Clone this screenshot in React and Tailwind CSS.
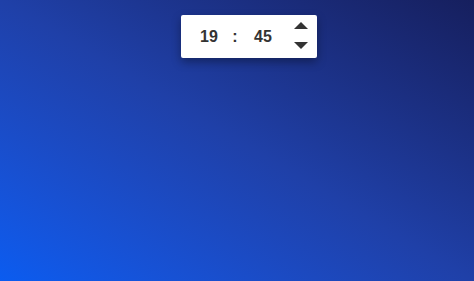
export default function App() {
  return (
    <div className="w-[474px] h-[281px] overflow-hidden bg-linear-to-tr from-[#0a5cf0] via-[#1f40a8] to-[#161f5e] pt-[15px] pl-[181px]" style={{ fontFamily: '"Liberation Sans", Arial, sans-serif' }}>
      <div className="w-[136px] h-[43px] bg-white rounded-[2px] shadow-[0_4px_10px_rgba(0,0,0,0.35)] flex items-center text-[#333] font-bold text-[16px]">
        <span className="ml-[19px] w-[17px] text-center">19</span>
        <span className="ml-[15px] w-[6px] text-center">:</span>
        <span className="ml-[16px] w-[18px] text-center">45</span>
        <div className="ml-[22px] mb-[3px] flex flex-col gap-[13px]">
          <svg width="14" height="7" viewBox="0 0 14 7"><path d="M7 0 L14 7 L0 7 Z" fill="#333" /></svg>
          <svg width="14" height="7" viewBox="0 0 14 7"><path d="M0 0 L14 0 L7 7 Z" fill="#333" /></svg>
        </div>
      </div>
    </div>
  );
}
